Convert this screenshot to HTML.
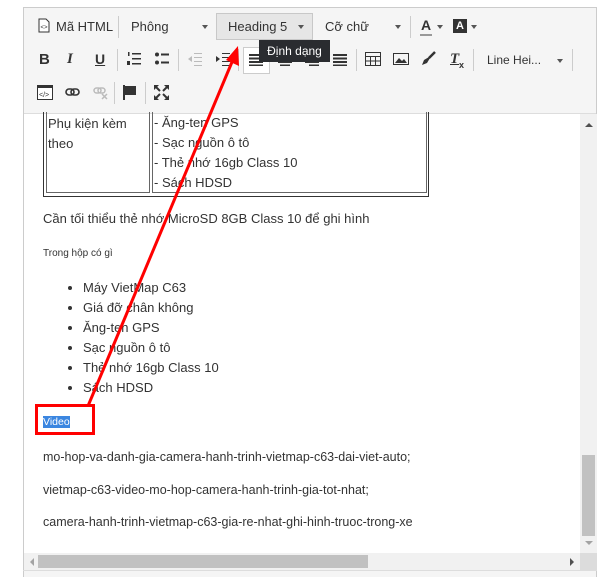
<!DOCTYPE html>
<html><head><meta charset="utf-8"><style>
body{margin:0;width:613px;height:577px;background:#fff;position:relative;overflow:hidden;font-family:"Liberation Sans",Arial,sans-serif;color:#333}
.a{position:absolute}
#ed{left:23px;top:7px;width:574px;height:570px;border:1px solid #ccc;border-bottom:none;box-sizing:border-box}
#tb{left:24px;top:8px;width:572px;height:105px;background:#f5f5f5;border-bottom:1px solid #ddd}
.t{font-size:13px;color:#333}
.sep{width:1px;height:22px;background:#ccc}
.car{width:0;height:0;border-left:3px solid transparent;border-right:3px solid transparent;border-top:4px solid #555}
.c{font-size:14px;color:#333}
</style></head><body>
<div class="a" id="ed"></div>
<div class="a" id="tb"></div>
<!-- row1 -->
<svg class="a" style="left:38px;top:18px" width="12" height="15" viewBox="0 0 12 15"><path d="M1 1h7l3 3v10H1z" fill="#fff" stroke="#333"/><text x="2.5" y="11" font-size="6" font-family="Liberation Sans" fill="#333">&lt;&gt;</text></svg>
<div class="a t" style="left:56px;top:19px">Mã HTML</div>
<div class="a sep" style="left:118px;top:16px"></div>
<div class="a t" style="left:131px;top:19px">Phông</div>
<div class="a car" style="left:202px;top:25px"></div>
<div class="a" style="left:216px;top:13px;width:97px;height:27px;background:#e6e6e6;border:1px solid #c8c8c8;box-sizing:border-box"></div>
<div class="a t" style="left:228px;top:19px">Heading 5</div>
<div class="a car" style="left:298px;top:25px"></div>
<div class="a t" style="left:325px;top:19px">Cỡ chữ</div>
<div class="a car" style="left:395px;top:25px"></div>
<div class="a sep" style="left:410px;top:16px"></div>
<div class="a" style="left:421px;top:17px;font-size:14px;font-weight:bold;color:#333">A</div>
<div class="a" style="left:420px;top:34px;width:12px;height:2px;background:#999"></div>
<div class="a car" style="left:437px;top:25px"></div>
<div class="a" style="left:453px;top:19px;width:14px;height:14px;background:#333;color:#fff;font-size:11px;font-weight:bold;text-align:center;line-height:14px">A</div>
<div class="a car" style="left:471px;top:25px"></div>
<!-- row2 -->
<div class="a" style="left:39px;top:51px;font-size:15px;font-weight:bold">B</div>
<div class="a" style="left:67px;top:51px;font-size:15px;font-style:italic;font-weight:bold;font-family:'Liberation Serif',serif">I</div>
<div class="a" style="left:95px;top:51px;font-size:14px;font-weight:bold;text-decoration:underline">U</div>
<div class="a sep" style="left:117px;top:49px"></div>
<svg class="a" style="left:127px;top:52px" width="14" height="14"><g fill="#333"><rect x="5" y="1" width="9" height="1.5"/><rect x="5" y="6" width="9" height="1.5"/><rect x="5" y="11" width="9" height="1.5"/><rect x="1" y="0" width="1.5" height="4"/><rect x="0" y="9" width="3" height="4"/></g></svg>
<svg class="a" style="left:155px;top:52px" width="14" height="14"><g fill="#333"><circle cx="2" cy="2.5" r="2"/><circle cx="2" cy="10.5" r="2"/><rect x="6" y="1.5" width="8" height="2"/><rect x="6" y="9.5" width="8" height="2"/></g></svg>
<div class="a sep" style="left:178px;top:49px"></div>
<svg class="a" style="left:188px;top:52px" width="14" height="14"><g fill="#bbb"><rect x="6" y="1" width="8" height="1"/><rect x="6" y="5" width="8" height="1"/><rect x="6" y="9" width="8" height="1"/><rect x="6" y="13" width="8" height="1"/><path d="M0 7l4-3v6z"/></g></svg>
<svg class="a" style="left:216px;top:52px" width="14" height="14"><g fill="#333"><rect x="6" y="1" width="8" height="1"/><rect x="6" y="5" width="8" height="1"/><rect x="6" y="9" width="8" height="1"/><rect x="6" y="13" width="8" height="1"/><path d="M4 7L0 4v6z"/></g></svg>
<div class="a sep" style="left:238px;top:49px"></div>
<div class="a" style="left:243px;top:47px;width:27px;height:27px;background:#fff;border:1px solid #ccc;box-sizing:border-box"></div>
<svg class="a" style="left:249px;top:54px" width="14" height="12"><g fill="#333"><rect y="0" width="14" height="2"/><rect y="3.5" width="14" height="2"/><rect y="7" width="14" height="2"/><rect y="10.5" width="14" height="2"/></g></svg>
<svg class="a" style="left:278px;top:54px" width="14" height="12"><g fill="#333"><rect x="0" y="0" width="14" height="2"/><rect x="2" y="3.5" width="10" height="2"/><rect x="0" y="7" width="14" height="2"/><rect x="2" y="10.5" width="10" height="2"/></g></svg>
<svg class="a" style="left:305px;top:54px" width="14" height="12"><g fill="#333"><rect x="0" y="0" width="14" height="2"/><rect x="4" y="3.5" width="10" height="2"/><rect x="0" y="7" width="14" height="2"/><rect x="4" y="10.5" width="10" height="2"/></g></svg>
<svg class="a" style="left:333px;top:54px" width="14" height="12"><g fill="#333"><rect y="0" width="14" height="2"/><rect y="3.5" width="14" height="2"/><rect y="7" width="14" height="2"/><rect y="10.5" width="14" height="2"/></g></svg>
<div class="a sep" style="left:356px;top:49px"></div>
<svg class="a" style="left:365px;top:52px" width="16" height="14"><rect x="0.5" y="0.5" width="15" height="13" fill="none" stroke="#333"/><path d="M0 4.5h16M0 9h16M5.5 4v10M10.5 4v10" stroke="#333"/></svg>
<svg class="a" style="left:393px;top:53px" width="16" height="12"><rect x="0.5" y="0.5" width="15" height="11" fill="none" stroke="#333"/><path d="M2 10l4-5 3 3 2-2 3 4z" fill="#333"/></svg>
<svg class="a" style="left:421px;top:51px" width="15" height="15"><path d="M14 1l-6 6" stroke="#333" stroke-width="2.5"/><path d="M8 6l-5 3-2 5 5-2 3-5z" fill="#333"/></svg>
<div class="a" style="left:450px;top:51px;font-size:15px;font-style:italic;font-weight:bold;font-family:'Liberation Serif',serif;text-decoration:underline">T</div>
<div class="a" style="left:459px;top:60px;font-size:9px;font-weight:bold">x</div>
<div class="a sep" style="left:473px;top:49px"></div>
<div class="a t" style="left:487px;top:53px;font-size:12px">Line Hei...</div>
<div class="a car" style="left:557px;top:59px"></div>
<div class="a sep" style="left:572px;top:49px"></div>
<!-- tooltip -->
<div class="a" style="left:259px;top:40px;width:71px;height:22px;background:#2a2c30;color:#fff;font-size:12px;line-height:22px;text-align:center">Định dạng</div>
<!-- row3 -->
<svg class="a" style="left:37px;top:85px" width="16" height="15"><rect x="0.5" y="0.5" width="15" height="14" fill="#fff" stroke="#333"/><rect x="0" y="0" width="16" height="3" fill="#333"/><text x="2" y="12" font-size="7" font-family="Liberation Sans" fill="#333">&lt;/&gt;</text></svg>
<svg class="a" style="left:65px;top:88px" width="15" height="9"><rect x="1" y="1" width="8" height="6" rx="3" fill="none" stroke="#333" stroke-width="1.6"/><rect x="6" y="1" width="8" height="6" rx="3" fill="none" stroke="#333" stroke-width="1.6"/></svg>
<svg class="a" style="left:93px;top:87px" width="16" height="13"><rect x="1" y="1" width="7" height="5" rx="2.5" fill="none" stroke="#bbb" stroke-width="1.5"/><rect x="5" y="1" width="7" height="5" rx="2.5" fill="none" stroke="#bbb" stroke-width="1.5"/><path d="M9 7l5 5M14 7l-5 5" stroke="#bbb" stroke-width="1.5"/></svg>
<div class="a sep" style="left:114px;top:82px"></div>
<svg class="a" style="left:123px;top:85px" width="14" height="15"><rect x="0" y="0" width="2" height="15" fill="#333"/><path d="M2 1h11v9H2z" fill="#333"/></svg>
<div class="a sep" style="left:145px;top:82px"></div>
<svg class="a" style="left:154px;top:85px" width="15" height="15"><g fill="#333"><path d="M0 0h5l-5 5zM15 0v5l-5-5zM0 15v-5l5 5zM15 15h-5l5-5z"/><path d="M2 2l4 4M13 2l-4 4M2 13l4-4M13 13l-4-4" stroke="#333" stroke-width="2"/></g></svg>
<!-- content -->
<div class="a" style="left:43px;top:112px;width:386px;height:85px;border:1px solid #333;border-top:none;box-sizing:border-box"></div>
<div class="a" style="left:46px;top:112px;width:104px;height:81px;border:1px solid #666;border-top:none;box-sizing:border-box"></div>
<div class="a" style="left:152px;top:112px;width:275px;height:81px;border:1px solid #666;border-top:none;box-sizing:border-box"></div>
<div class="a c" style="left:48px;top:114px;line-height:20px;font-size:13px">Phụ kiện kèm<br>theo</div>
<div class="a c" style="left:154px;top:113px;line-height:20px;font-size:13px">- Ăng-ten GPS<br>- Sạc nguồn ô tô<br>- Thẻ nhớ 16gb Class 10<br>- Sách HDSD</div>
<div class="a c" style="left:43px;top:211px;font-size:13px">Cần tối thiểu thẻ nhớ MicroSD 8GB Class 10 để ghi hình</div>
<div class="a" style="left:43px;top:248px;font-size:10px;color:#333">Trong hộp có gì</div>
<ul class="a c" style="left:43px;top:278px;margin:0;padding-left:40px;line-height:20px;font-size:13px;width:300px">
<li>Máy VietMap C63</li><li>Giá đỡ chân không</li><li>Ăng-ten GPS</li><li>Sạc nguồn ô tô</li><li>Thẻ nhớ 16gb Class 10</li><li>Sách HDSD</li></ul>
<div class="a" style="left:43px;top:416px;font-size:10.5px;background:#3b86e0;color:#fff;line-height:12px">Video</div>
<div class="a c" style="left:43px;top:450px;font-size:12.5px">mo-hop-va-danh-gia-camera-hanh-trinh-vietmap-c63-dai-viet-auto;</div>
<div class="a c" style="left:43px;top:483px;font-size:12.5px">vietmap-c63-video-mo-hop-camera-hanh-trinh-gia-tot-nhat;</div>
<div class="a c" style="left:43px;top:515px;font-size:12.5px">camera-hanh-trinh-vietmap-c63-gia-re-nhat-ghi-hinh-truoc-trong-xe</div>
<!-- scrollbars -->
<div class="a" style="left:580px;top:114px;width:17px;height:439px;background:#f1f1f1"></div>
<div class="a" style="left:582px;top:455px;width:13px;height:81px;background:#c1c1c1"></div>
<div class="a" style="left:585px;top:123px;border-left:4px solid transparent;border-right:4px solid transparent;border-bottom:4px solid #505050;width:0;height:0"></div>
<div class="a" style="left:585px;top:541px;border-left:4px solid transparent;border-right:4px solid transparent;border-top:4px solid #a3a3a3;width:0;height:0"></div>
<div class="a" style="left:24px;top:553px;width:556px;height:17px;background:#f1f1f1"></div>
<div class="a" style="left:38px;top:555px;width:330px;height:13px;background:#c1c1c1"></div>
<div class="a" style="left:30px;top:558px;border-top:4px solid transparent;border-bottom:4px solid transparent;border-right:4px solid #a3a3a3;width:0;height:0"></div>
<div class="a" style="left:570px;top:558px;border-top:4px solid transparent;border-bottom:4px solid transparent;border-left:4px solid #505050;width:0;height:0"></div>
<div class="a" style="left:580px;top:553px;width:17px;height:17px;background:#dcdcdc"></div>
<div class="a" style="left:23px;top:570px;width:574px;height:1px;background:#ddd"></div>
<div class="a" style="left:24px;top:571px;width:572px;height:6px;background:#f5f5f5"></div>
<!-- annotations -->
<div class="a" style="left:35px;top:404px;width:60px;height:31px;border:3px solid #f00;box-sizing:border-box"></div>
<svg class="a" style="left:0;top:0" width="613" height="577"><line x1="88" y1="406" x2="232" y2="62" stroke="#f00" stroke-width="3"/><path d="M238 46L239 66L226 60z" fill="#f00"/></svg>
</body></html>
